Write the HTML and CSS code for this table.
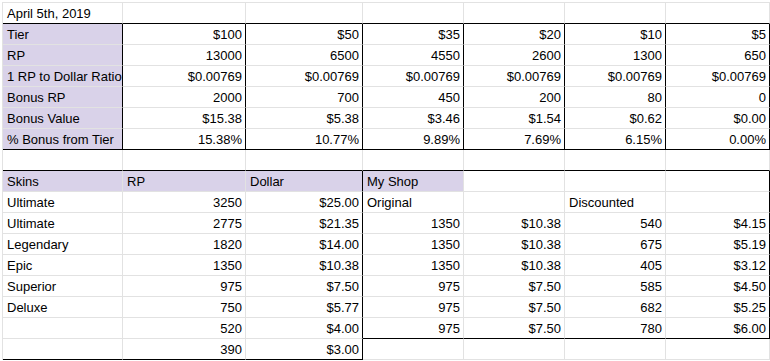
FILE: index.html
```html
<!DOCTYPE html>
<html>
<head>
<meta charset="utf-8">
<link rel="stylesheet" href="styles.css">
</head>
<body>
<div class="sheet">
  <!-- row 1 -->
  <div class="c bb">April 5th, 2019</div><div class="c bb"></div><div class="c bb"></div><div class="c bb"></div><div class="c bb"></div><div class="c bb"></div><div class="c bb"></div>
  <!-- top table -->
  <div class="c p br">Tier</div><div class="c r br">$100</div><div class="c r br">$50</div><div class="c r br">$35</div><div class="c r br">$20</div><div class="c r br">$10</div><div class="c r br">$5</div>
  <div class="c p br">RP</div><div class="c r br">13000</div><div class="c r br">6500</div><div class="c r br">4550</div><div class="c r br">2600</div><div class="c r br">1300</div><div class="c r br">650</div>
  <div class="c p br">1 RP to Dollar Ratio</div><div class="c r br">$0.00769</div><div class="c r br">$0.00769</div><div class="c r br">$0.00769</div><div class="c r br">$0.00769</div><div class="c r br">$0.00769</div><div class="c r br">$0.00769</div>
  <div class="c p br">Bonus RP</div><div class="c r br">2000</div><div class="c r br">700</div><div class="c r br">450</div><div class="c r br">200</div><div class="c r br">80</div><div class="c r br">0</div>
  <div class="c p br">Bonus Value</div><div class="c r br">$15.38</div><div class="c r br">$5.38</div><div class="c r br">$3.46</div><div class="c r br">$1.54</div><div class="c r br">$0.62</div><div class="c r br">$0.00</div>
  <div class="c p br bb">% Bonus from Tier</div><div class="c r br bb">15.38%</div><div class="c r br bb">10.77%</div><div class="c r br bb">9.89%</div><div class="c r br bb">7.69%</div><div class="c r br bb">6.15%</div><div class="c r br bb">0.00%</div>
  <!-- spacer row -->
  <div class="c bb"></div><div class="c bb"></div><div class="c bb"></div><div class="c bb"></div><div class="c bb"></div><div class="c bb"></div><div class="c bb"></div>
  <!-- bottom table -->
  <div class="c p">Skins</div><div class="c p">RP</div><div class="c p br">Dollar</div><div class="c p">My Shop</div><div class="c"></div><div class="c"></div><div class="c br"></div>
  <div class="c">Ultimate</div><div class="c r">3250</div><div class="c r br">$25.00</div><div class="c">Original</div><div class="c"></div><div class="c">Discounted</div><div class="c br"></div>
  <div class="c">Ultimate</div><div class="c r">2775</div><div class="c r br">$21.35</div><div class="c r">1350</div><div class="c r">$10.38</div><div class="c r">540</div><div class="c r br">$4.15</div>
  <div class="c">Legendary</div><div class="c r">1820</div><div class="c r br">$14.00</div><div class="c r">1350</div><div class="c r">$10.38</div><div class="c r">675</div><div class="c r br">$5.19</div>
  <div class="c">Epic</div><div class="c r">1350</div><div class="c r br">$10.38</div><div class="c r">1350</div><div class="c r">$10.38</div><div class="c r">405</div><div class="c r br">$3.12</div>
  <div class="c">Superior</div><div class="c r">975</div><div class="c r br">$7.50</div><div class="c r">975</div><div class="c r">$7.50</div><div class="c r">585</div><div class="c r br">$4.50</div>
  <div class="c">Deluxe</div><div class="c r">750</div><div class="c r br">$5.77</div><div class="c r">975</div><div class="c r">$7.50</div><div class="c r">682</div><div class="c r br">$5.25</div>
  <div class="c"></div><div class="c r">520</div><div class="c r br">$4.00</div><div class="c r bb">975</div><div class="c r bb">$7.50</div><div class="c r bb">780</div><div class="c r br bb">$6.00</div>
  <div class="c bb"></div><div class="c r bb">390</div><div class="c r br bb">$3.00</div><div class="c"></div><div class="c"></div><div class="c"></div><div class="c"></div>
</div>
</body>
</html>
```

FILE: styles.css
```css
html, body {
  margin: 0;
  padding: 0;
  background: #ffffff;
  overflow: hidden;
}
body {
  padding: 2px 0 0 2px;
}
.sheet {
  display: grid;
  grid-template-columns: 120px 123px 117px 101px 101px 101px 104px;
  grid-auto-rows: 21px;
  border-top: 1px solid #e2e2e2;
  border-left: 1px solid #e2e2e2;
  width: max-content;
  font-family: "Liberation Sans", Arial, sans-serif;
  font-size: 13px;
  color: #000000;
}
.c {
  box-sizing: border-box;
  border-right: 1px solid #e2e2e2;
  border-bottom: 1px solid #e2e2e2;
  padding: 0 3px 0 4px;
  line-height: 21px;
  white-space: nowrap;
  overflow: hidden;
}
.p {
  background: #d9d2e9;
}
.r {
  text-align: right;
}
.bb {
  border-bottom-color: #000000;
}
.br {
  border-right-color: #000000;
}
```
